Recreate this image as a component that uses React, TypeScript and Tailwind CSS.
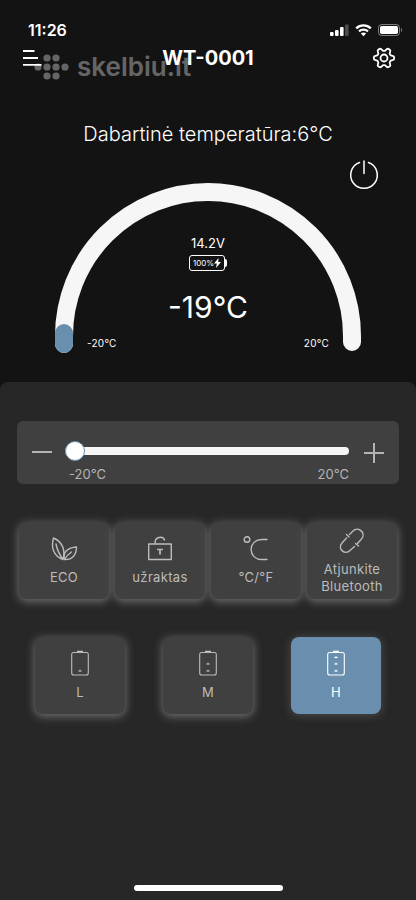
import { useState } from "react";
import type { ReactNode } from "react";

const MIN = -19;
const MAX = 20;

// six-lobed cog outline around the centre of a 24x24 box
function cogPath() {
  const pts: string[] = [];
  for (let d = 0; d < 360; d += 5) {
    const a = (d * Math.PI) / 180;
    const c = Math.cos(6 * a);
    const r = 8.6 + 1.6 * Math.tanh(2 * c);
    pts.push(`${(12 + r * Math.cos(a)).toFixed(2)} ${(12 + r * Math.sin(a)).toFixed(2)}`);
  }
  return `M${pts.join("L")}Z`;
}

function StatusBar() {
  return (
    <div className="flex h-6 items-center justify-between pl-7 pr-3 text-base font-semibold">
      <span>11:26</span>
      <svg width="74" height="14" viewBox="0 0 74 14" fill="#fff" aria-hidden="true">
        <rect x="0" y="9" width="3.6" height="4" rx="1" />
        <rect x="5" y="7" width="3.6" height="6" rx="1" />
        <rect x="10" y="4" width="3.6" height="9" rx="1" />
        <rect x="15" y="1.5" width="3.6" height="11.5" rx="1" opacity="0.25" />
        <g fill="none" stroke="#fff" strokeWidth="2.3">
          <path d="M26.2 5.3a10.6 10.6 0 0 1 14.6 0" />
          <path d="M29 8.4a6.6 6.6 0 0 1 9 0" />
        </g>
        <path d="M30.9 10.6a3.8 3.8 0 0 1 5.2 0l-2.6 2.7z" />
        <rect x="48.5" y="1.5" width="21" height="11" rx="3.2" fill="none" stroke="#fff" strokeOpacity="0.45" />
        <rect x="50" y="3" width="18" height="8" rx="1.8" />
        <path d="M71 5v4c1.6-.6 1.6-3.4 0-4z" opacity="0.45" />
      </svg>
    </div>
  );
}

function Watermark() {
  const dots = [[13, 4], [22, 4], [4, 13], [13, 13], [22, 13], [31, 13], [13, 22], [22, 22]];
  return (
    <div className="pointer-events-none absolute left-[34px] top-3 flex items-center gap-2 text-white opacity-35">
      <svg width="35" height="26" viewBox="0 0 35 26" fill="currentColor" aria-hidden="true">
        {dots.map(([x, y]) => (
          <circle key={`${x}-${y}`} cx={x} cy={y} r="3.6" />
        ))}
      </svg>
      <span className="text-[26px] font-semibold leading-6">skelbiu.lt</span>
    </div>
  );
}

function Header() {
  return (
    <header className="relative flex h-8 items-center justify-between px-5">
      <button aria-label="Meniu" className="flex size-6 items-center justify-center">
        <svg width="20" height="18" viewBox="0 0 20 18" stroke="#fff" strokeWidth="1.8" aria-hidden="true">
          <path d="M1 2h11.500M1 9h15M1 15.800h18.500" />
        </svg>
      </button>
      <h1 className="text-xl font-bold">WT-0001</h1>
      <button aria-label="Nustatymai" className="flex size-6 items-center justify-center">
        <svg width="24" height="24" viewBox="0 0 24 24" fill="none" stroke="#fff" strokeWidth="1.8" strokeLinejoin="round" aria-hidden="true">
          <path d={cogPath()} />
          <circle cx="12" cy="12" r="3.500" />
        </svg>
      </button>
      <Watermark />
    </header>
  );
}

function Gauge({ target }: { target: number }) {
  return (
    <div className="grid">
      <svg className="col-start-1 row-start-1 mt-6 justify-self-center" width="306" height="172" viewBox="0 0 306 172" fill="none" strokeLinecap="round" aria-hidden="true">
        <path d="M9 161V153A144 144 0 0 1 297 153V159" stroke="#f6f6f6" strokeWidth="18" />
        <path d="M9 150V161" stroke="#6a8fae" strokeWidth="18" />
      </svg>
      <button aria-label="Maitinimas" className="col-start-1 row-start-1 mr-9 size-8 self-start justify-self-end">
        <svg width="32" height="32" viewBox="0 0 32 32" fill="none" stroke="#fff" strokeWidth="1.5" strokeLinecap="round" aria-hidden="true">
          <path d="M11.500 3.500a13.300 13.300 0 1 0 9 0M16 2v12.500" />
        </svg>
      </button>
      <div className="col-start-1 row-start-1 flex flex-col items-center pt-[74px]">
        <span className="text-[13px] leading-5">14.2V</span>
        <div className="mt-0.5 flex items-center">
          <span className="flex h-4 items-center rounded-[3px] border-[1.5px] border-white px-[3px] text-[8px]">
            100%
            <svg width="7" height="10" viewBox="0 0 7 10" fill="#fff" aria-hidden="true">
              <path d="M4.500 0 0 5.600h2.800L2 10l5-6H4.200z" />
            </svg>
          </span>
          <span className="h-2 w-0.5 rounded-r-sm bg-white" />
        </div>
        <span className="mt-4 text-[30px] leading-10">{target}°C</span>
        <div className="mt-2 flex w-[242px] justify-between text-[10px] leading-4 tracking-wide">
          <span>-20°C</span>
          <span>20°C</span>
        </div>
      </div>
    </div>
  );
}

function Tile({ label, active, onClick, children }: {
  label: string; active?: boolean; onClick?: () => void; children: ReactNode;
}) {
  return (
    <button
      onClick={onClick}
      className={`flex h-[77px] w-[90px] flex-col items-center justify-center gap-1.5 rounded-lg text-[13px] leading-[17px] tracking-wide ${
        active
          ? "bg-[#6a8fae] text-white shadow-[0_1px_8px_1px_#484848]"
          : "bg-[#404040] text-[#bcbcbc] shadow-[0_2px_8px_1px_#6a6a6a]"
      }`}
    >
      {children}
      <span className="w-full">{label}</span>
    </button>
  );
}

function LevelIcon({ dots }: { dots: number }) {
  return (
    <svg width="20" height="28" viewBox="0 0 20 28" fill="none" stroke="currentColor" strokeWidth="1.1" aria-hidden="true">
      <rect x="1.700" y="2.500" width="16.600" height="22.500" rx="2" />
      <path d="M7 1.500h6" strokeWidth="1.600" />
      {[21, 14, 7.5].slice(0, dots).map((y) => (
        <path key={y} d={`M8.400 ${y}h3.200M10 ${y - 1.300}v2`} />
      ))}
    </svg>
  );
}

const iconProps = {
  width: 28, height: 28, viewBox: "0 0 28 28", fill: "none", stroke: "currentColor",
  strokeWidth: 1.4, strokeLinecap: "round", strokeLinejoin: "round", "aria-hidden": true,
} as const;

function Controls() {
  return (
    <div className="mt-[38px] flex justify-center gap-1.5">
      <Tile label="ECO">
        <svg {...iconProps}>
          <path d="M13 24.500C3 21 1 12 3.500 3c8 3.500 12.500 11 9.500 21.500zM6 9c1 5.500 3 10 7 15.500" />
          <path d="M14.500 24.500c-2-7 3-12 12-12.500C26.500 20 22 25 14.500 24.500zM14.500 24.500c2-3.500 4-5.500 7-7.500" />
        </svg>
      </Tile>
      <Tile label="užraktas">
        <svg {...iconProps}>
          <path d="M2.700 9h22.600v15.500H2.700zM9 9C8.500 1 17 1 18.500 5" />
          <path d="M11 14.500h6M14 14.500v5" strokeWidth="1.700" strokeLinecap="butt" />
        </svg>
      </Tile>
      <Tile label="°C/°F">
        <svg {...iconProps}>
          <circle cx="5" cy="4.500" r="2.800" />
          <path d="M25 4.500H20c-14.500 0-14.500 20 0 20h5" />
        </svg>
      </Tile>
      <Tile label="Atjunkite Bluetooth">
        <svg {...iconProps}>
          <path d="M11.500 7.500l3.500-3.500c5.500-5 13.500 2 8.500 8l-4 4.500" />
          <path d="M8.500 11l-4.500 5c-5 6 3 12.500 8 7.500l4.500-4M8.500 7.500l2.500 2.500M17.500 16.500l3 2.500" />
        </svg>
      </Tile>
    </div>
  );
}

export default function App() {
  const [target, setTarget] = useState(MIN);
  const [level, setLevel] = useState("H");
  const step = (n: number) => setTarget((v) => Math.min(MAX, Math.max(MIN, v + n)));

  return (
    <div className="flex min-h-screen flex-col bg-[#131313] pt-[18px] font-[Inter,sans-serif] text-white">
      <StatusBar />
      <Header />
      <p className="mt-[46px] text-center text-xl font-light leading-7">Dabartinė temperatūra:6°C</p>
      <div className="mt-[11px]">
        <Gauge target={target} />
      </div>

      <main className="mt-[27px] flex flex-1 flex-col rounded-t-lg bg-[#272727] px-[17px] pt-[39px]">
        <div className="flex h-[63px] rounded-md bg-[#404040] px-[14px] pt-5 text-[#b4b4b4]">
          <button aria-label="Mažinti" onClick={() => step(-1)} className="size-[22px]">
            <svg width="22" height="22" viewBox="0 0 22 22" stroke="currentColor" strokeWidth="2" aria-hidden="true">
              <path d="M1 11h20" />
            </svg>
          </button>
          <div className="ml-3 mr-[14px] flex min-w-0 flex-1 flex-col">
            <input
              type="range"
              aria-label="Temperatūra"
              min={MIN}
              max={MAX}
              value={target}
              onChange={(e) => setTarget(Number(e.target.value))}
              className="h-5 w-full appearance-none bg-transparent outline-none [&::-webkit-slider-runnable-track]:h-2 [&::-webkit-slider-runnable-track]:rounded-full [&::-webkit-slider-runnable-track]:bg-[#f6f6f6] [&::-webkit-slider-thumb]:-mt-1.5 [&::-webkit-slider-thumb]:size-5 [&::-webkit-slider-thumb]:appearance-none [&::-webkit-slider-thumb]:rounded-full [&::-webkit-slider-thumb]:border [&::-webkit-slider-thumb]:border-[#6a8fae] [&::-webkit-slider-thumb]:bg-white"
            />
            <div className="mt-1 flex justify-between pl-1 text-[13px] leading-5">
              <span>-20°C</span>
              <span>20°C</span>
            </div>
          </div>
          <button aria-label="Didinti" onClick={() => step(1)} className="size-[22px]">
            <svg width="22" height="22" viewBox="0 0 22 22" stroke="currentColor" strokeWidth="2" aria-hidden="true">
              <path d="M1 12h20M11 2v20" />
            </svg>
          </button>
        </div>

        <Controls />

        <div className="mt-[38px] flex justify-center gap-[38px]">
          {["L", "M", "H"].map((l, i) => (
            <Tile key={l} label={l} active={level === l} onClick={() => setLevel(l)}>
              <LevelIcon dots={i + 1} />
            </Tile>
          ))}
        </div>

        <div className="mb-[9px] mt-auto h-1.5 w-[149px] self-center rounded-full bg-white" />
      </main>
    </div>
  );
}
